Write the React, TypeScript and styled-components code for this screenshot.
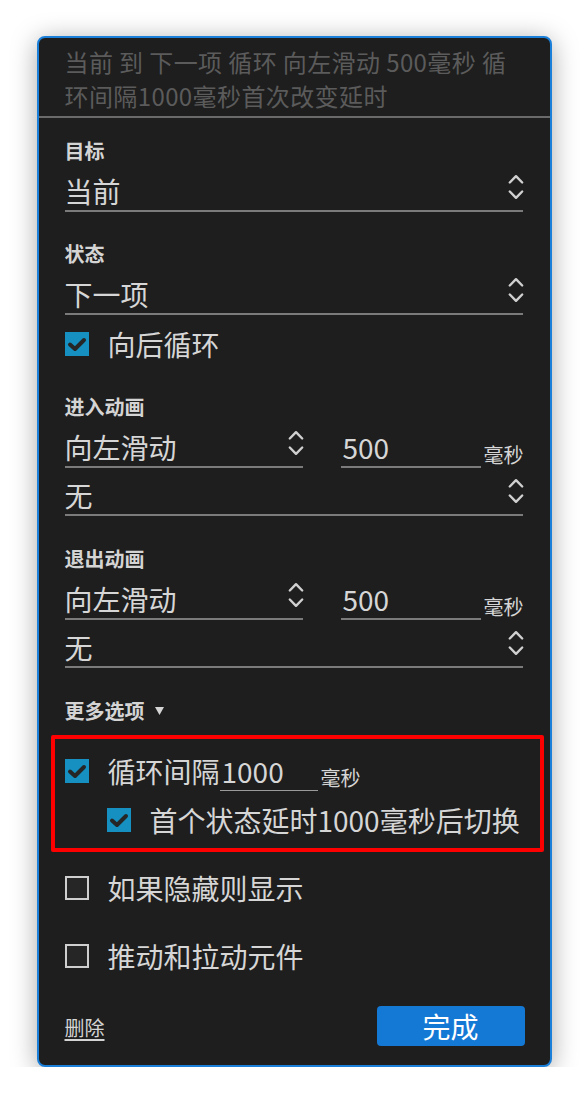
import React from "react";
import styled, { createGlobalStyle } from "styled-components";

const GlobalStyle = createGlobalStyle`
  html, body {
    margin: 0;
    padding: 0;
    background: #ffffff;
  }
  body {
    font-family: "Noto Sans CJK SC", "Noto Sans", sans-serif;
    -webkit-font-smoothing: antialiased;
  }
  * { box-sizing: border-box; }
`;

const Panel = styled.div`
  width: 515px;
  margin: 36px auto 0;
  background: #1e1e1e;
  border: 2px solid #1a7fd9;
  border-radius: 8px;
  box-shadow: 0 4px 26px rgba(0, 0, 0, 0.35);
  overflow: hidden;
`;

const Summary = styled.div`
  padding: 7px 40px 3px 26px;
  font-size: 24px;
  line-height: 34px;
  letter-spacing: 0.4px;
  color: #5b5b5b;
  border-bottom: 2px solid #6a6a6a;
`;

const Body = styled.div`
  display: flex;
  flex-direction: column;
  padding: 19px 27px 19px 26px;
`;

const Section = styled.div<{ $top?: number }>`
  display: flex;
  flex-direction: column;
  margin-top: ${(p) => p.$top ?? 0}px;
`;

const FieldLabel = styled.div`
  font-size: 20px;
  font-weight: 700;
  line-height: 28px;
  color: #d4d4d4;
  margin-bottom: 7px;
`;

const Select = styled.div<{ $top?: number; $width?: number }>`
  display: flex;
  align-items: flex-start;
  justify-content: space-between;
  height: 40px;
  border-bottom: 2px solid #7b7b7b;
  margin-top: ${(p) => p.$top ?? 0}px;
  width: ${(p) => (p.$width ? `${p.$width}px` : "auto")};
  flex: ${(p) => (p.$width ? "0 0 auto" : "1 1 auto")};
`;

const FieldText = styled.span`
  font-size: 28px;
  line-height: 38px;
  color: #d6d6d6;
  white-space: nowrap;
`;

const ChevronBox = styled.svg`
  flex: 0 0 auto;
  margin-top: 1px;
  margin-right: -1px;
`;

const FieldRow = styled.div`
  display: flex;
  align-items: stretch;
`;

const NumberField = styled.div<{ $width: number; $thin?: boolean }>`
  width: ${(p) => p.$width}px;
  height: ${(p) => (p.$thin ? 39 : 40)}px;
  padding-left: 2px;
  border-bottom: ${(p) => (p.$thin ? "1px solid #9a9a9a" : "2px solid #7b7b7b")};
  flex: 0 0 auto;
`;

const Unit = styled.span<{ $lh?: number }>`
  align-self: flex-end;
  font-size: 20px;
  line-height: ${(p) => p.$lh ?? 26}px;
  color: #d6d6d6;
  margin-left: 3px;
  white-space: nowrap;
`;

const RowGap = styled.div`
  width: 38px;
  flex: 0 0 auto;
`;

const CheckRow = styled.div<{ $top?: number; $indent?: number }>`
  display: flex;
  align-items: center;
  height: 38px;
  margin-top: ${(p) => p.$top ?? 0}px;
  padding-left: ${(p) => p.$indent ?? 0}px;
`;

const CheckLabel = styled.span`
  font-size: 28px;
  line-height: 38px;
  color: #d6d6d6;
  margin-left: 19px;
  white-space: nowrap;
`;

const Box = styled.span<{ $checked: boolean }>`
  display: inline-flex;
  align-items: center;
  justify-content: center;
  width: 24px;
  height: 24px;
  flex: 0 0 auto;
  background: ${(p) => (p.$checked ? "#1590c0" : "#262626")};
  border: ${(p) => (p.$checked ? "none" : "2px solid #cfcfcf")};
`;

const MoreToggle = styled.div`
  display: flex;
  align-items: center;
  gap: 10px;
  margin-top: 29px;
  font-size: 20px;
  font-weight: 700;
  line-height: 28px;
  color: #d4d4d4;
`;

const Highlight = styled.div`
  display: flex;
  flex-direction: column;
  margin: 10px -21px 0 -14px;
  padding: 13px 0 9px 10px;
  border: 4px solid #ff0000;
  border-radius: 2px;
`;

const InlineText = styled.span`
  font-size: 28px;
  line-height: 38px;
  color: #d6d6d6;
  white-space: nowrap;
`;

const Footer = styled.div`
  display: flex;
  align-items: center;
  justify-content: space-between;
  margin-top: 31px;
  margin-right: -2px;
`;

const DeleteLink = styled.a`
  font-size: 20px;
  line-height: 28px;
  color: #d4d4d4;
  text-decoration: underline;
  text-underline-offset: 3px;
  margin-top: 4px;
  cursor: pointer;
`;

const DoneButton = styled.button`
  width: 148px;
  height: 40px;
  border: none;
  border-radius: 4px;
  background: #1479d5;
  color: #ffffff;
  font-family: inherit;
  font-size: 28px;
  line-height: 40px;
  padding: 0;
  cursor: pointer;
`;

const Chevron = () => (
  <ChevronBox width="16" height="28" viewBox="0 0 16 28">
    <polyline
      points="1.8,9.5 8,3.2 14.2,9.5"
      fill="none"
      stroke="#d0d0d0"
      strokeWidth="2.4"
      strokeLinecap="round"
      strokeLinejoin="round"
    />
    <polyline
      points="1.8,18.5 8,24.8 14.2,18.5"
      fill="none"
      stroke="#d0d0d0"
      strokeWidth="2.4"
      strokeLinecap="round"
      strokeLinejoin="round"
    />
  </ChevronBox>
);

const CheckBox = ({ checked }: { checked: boolean }) => (
  <Box $checked={checked}>
    {checked && (
      <svg width="24" height="24" viewBox="0 0 24 24">
        <polyline
          points="5,12.5 10,17 19,8"
          fill="none"
          stroke="#262626"
          strokeWidth="4"
          strokeLinecap="round"
          strokeLinejoin="round"
        />
      </svg>
    )}
  </Box>
);

const SelectField = ({
  value,
  top,
  width,
}: {
  value: string;
  top?: number;
  width?: number;
}) => (
  <Select $top={top} $width={width}>
    <FieldText>{value}</FieldText>
    <Chevron />
  </Select>
);

const AnimationSection = ({ title, top }: { title: string; top: number }) => (
  <Section $top={top}>
    <FieldLabel>{title}</FieldLabel>
    <FieldRow>
      <SelectField value="向左滑动" width={238} />
      <RowGap />
      <NumberField $width={140}>
        <FieldText>500</FieldText>
      </NumberField>
      <Unit>毫秒</Unit>
    </FieldRow>
    <SelectField value="无" top={8} />
  </Section>
);

export default function App() {
  return (
    <>
      <GlobalStyle />
      <Panel>
        <Summary>
          当前 到 下一项 循环 向左滑动 500毫秒 循环间隔1000毫秒首次改变延时
        </Summary>
        <Body>
          <Section>
            <FieldLabel>目标</FieldLabel>
            <SelectField value="当前" />
          </Section>
          <Section $top={28}>
            <FieldLabel>状态</FieldLabel>
            <SelectField value="下一项" />
            <CheckRow $top={10}>
              <CheckBox checked />
              <CheckLabel>向后循环</CheckLabel>
            </CheckRow>
          </Section>
          <AnimationSection title="进入动画" top={30} />
          <AnimationSection title="退出动画" top={29} />
          <MoreToggle>
            <span>更多选项</span>
            <svg width="9" height="8" viewBox="0 0 9 8">
              <polygon points="0,0 9,0 4.5,8" fill="#d4d4d4" />
            </svg>
          </MoreToggle>
          <Highlight>
            <CheckRow>
              <CheckBox checked />
              <CheckLabel>循环间隔</CheckLabel>
              <NumberField $width={98} $thin>
                <InlineText>1000</InlineText>
              </NumberField>
              <Unit $lh={24}>毫秒</Unit>
            </CheckRow>
            <CheckRow $top={11} $indent={42}>
              <CheckBox checked />
              <CheckLabel>首个状态延时1000毫秒后切换</CheckLabel>
            </CheckRow>
          </Highlight>
          <CheckRow $top={17}>
            <CheckBox checked={false} />
            <CheckLabel>如果隐藏则显示</CheckLabel>
          </CheckRow>
          <CheckRow $top={30}>
            <CheckBox checked={false} />
            <CheckLabel>推动和拉动元件</CheckLabel>
          </CheckRow>
          <Footer>
            <DeleteLink>删除</DeleteLink>
            <DoneButton>完成</DoneButton>
          </Footer>
        </Body>
      </Panel>
    </>
  );
}
